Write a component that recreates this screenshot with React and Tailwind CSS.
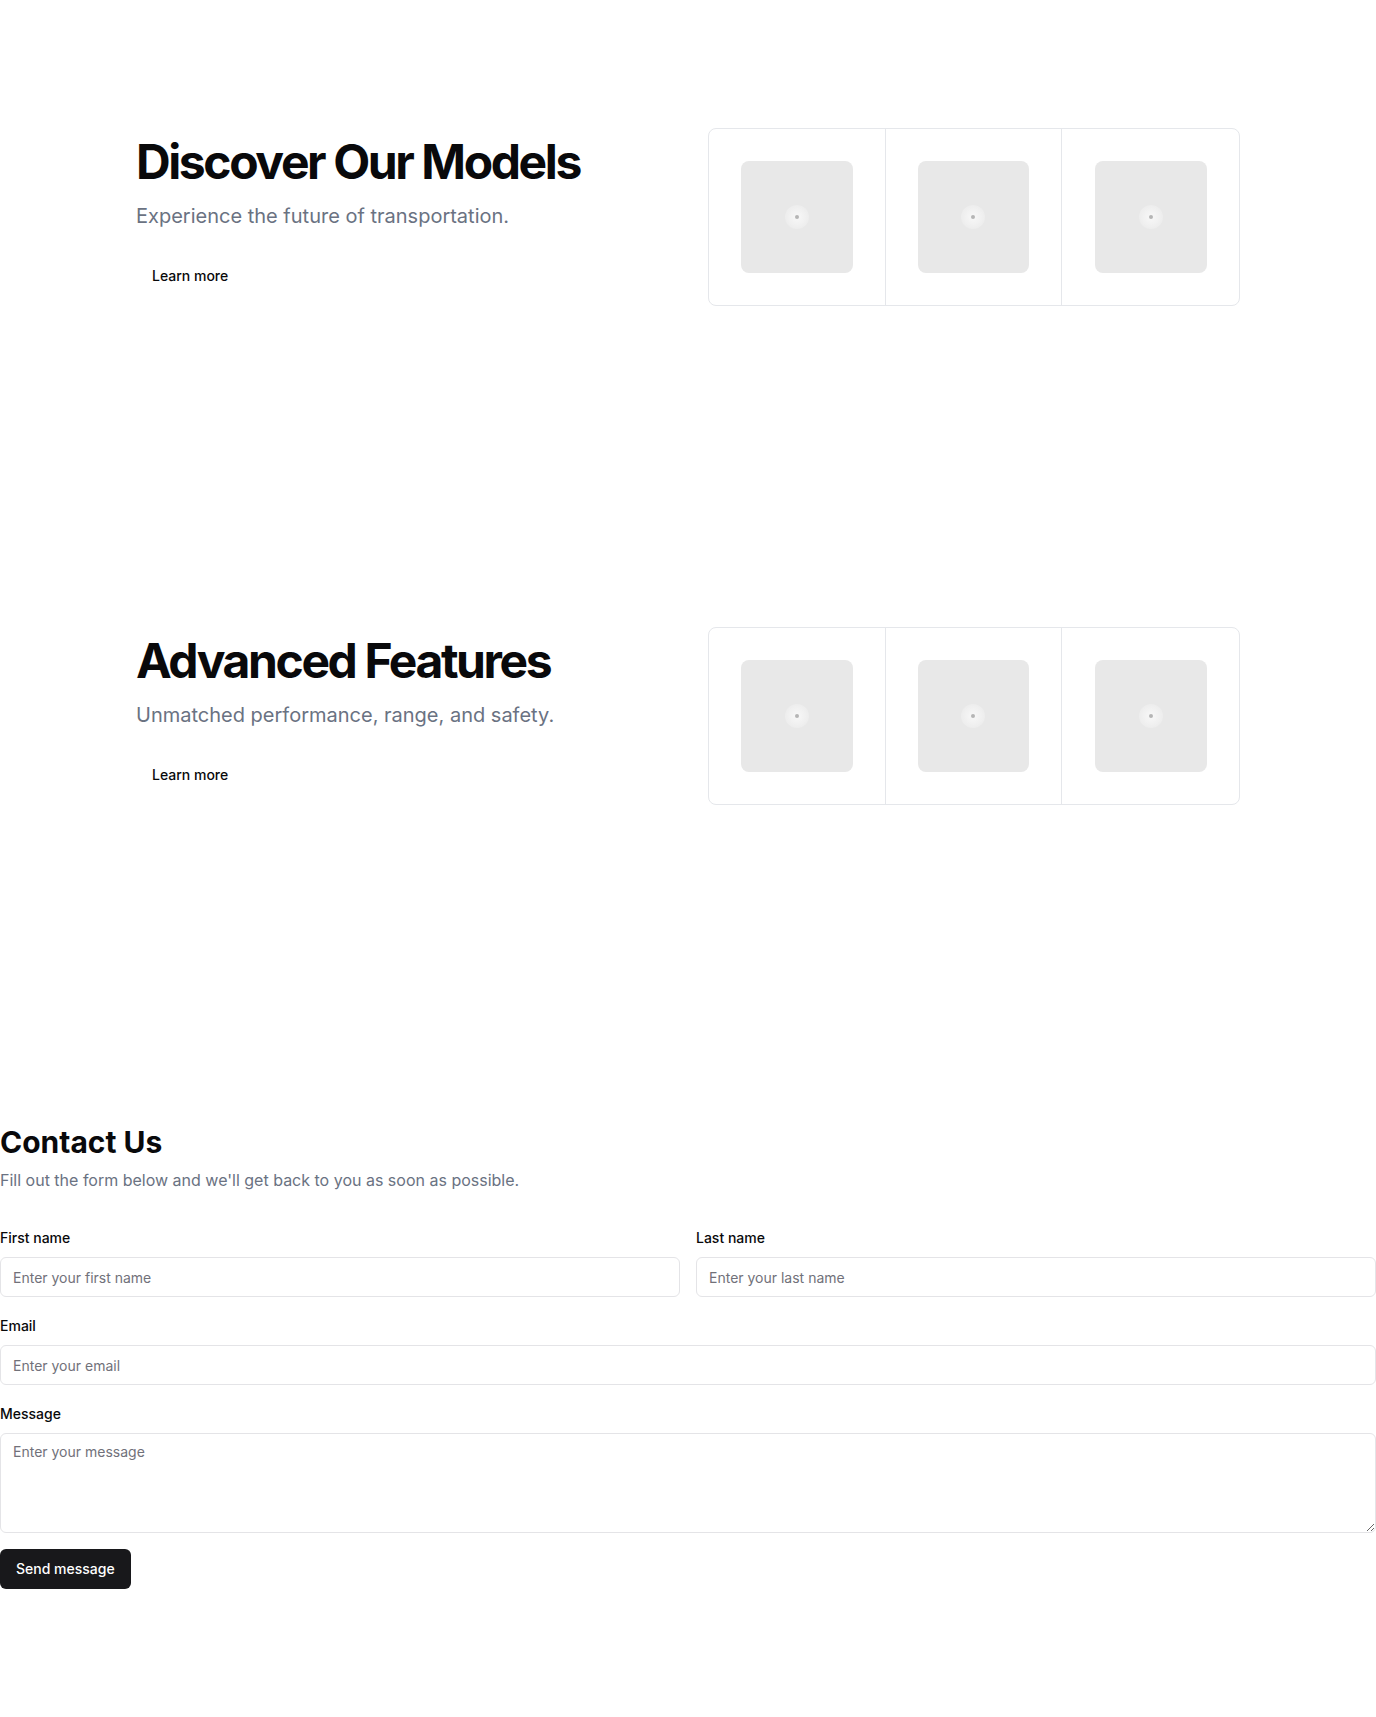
import React from "react";

const heroes = [
  { title: "Discover Our Models", sub: "Experience the future of transportation." },
  { title: "Advanced Features", sub: "Unmatched performance, range, and safety." },
];

function Placeholder() {
  return (
    <div className="flex h-[112px] w-[112px] items-center justify-center rounded-lg bg-[#e8e8e8]">
      <div className="flex h-[24px] w-[24px] items-center justify-center rounded-full bg-[radial-gradient(circle,#f8f8f8_0,#f1f1f1_45%,#e8e8e8_100%)]">
        <div className="h-[4px] w-[4px] rounded-full bg-[#b5b5b5]" />
      </div>
    </div>
  );
}

function Hero({ title, sub }) {
  return (
    <section className="min-h-[499px] pt-32">
      <div className="mx-auto grid max-w-6xl grid-cols-2 items-center gap-10 px-6">
        <div>
          <h1 className="text-5xl leading-none font-bold tracking-tighter text-[#09090b]">{title}</h1>
          <p className="mt-4 text-xl text-gray-500">{sub}</p>
          <div className="mt-[26px]">
            <button className="h-10 rounded-md px-4 text-sm font-medium text-[#09090b]">Learn more</button>
          </div>
        </div>
        <div className="grid grid-cols-3 divide-x divide-[#e5e7eb] rounded-lg border border-[#e5e7eb]">
          {[0, 1, 2].map(i => (
            <div key={i} className="flex items-center justify-center p-8">
              <Placeholder />
            </div>
          ))}
        </div>
      </div>
    </section>
  );
}

function Field({ label, children }) {
  return (
    <div>
      <label className="mb-3 block text-sm leading-none font-medium text-[#09090b]">{label}</label>
      {children}
    </div>
  );
}

const inputCls = "h-10 w-full rounded-md border border-[#e4e4e7] bg-white px-3 text-sm text-[#09090b] placeholder:text-[#71717a] outline-none";

export default function App() {
  return (
    <div className="min-h-screen bg-white font-[family-name:Inter,sans-serif]">
      {heroes.map(h => <Hero key={h.title} {...h} />)}

      <section className="pt-[126px] pb-32">
        <h2 className="text-3xl font-bold text-[#09090b]">Contact Us</h2>
        <p className="mt-2 text-base text-gray-500">Fill out the form below and we'll get back to you as soon as possible.</p>
        <form className="mt-[39px] flex flex-col gap-[22px]" onSubmit={e => e.preventDefault()}>
          <div className="grid grid-cols-2 gap-4">
            <Field label="First name"><input className={inputCls} placeholder="Enter your first name" /></Field>
            <Field label="Last name"><input className={inputCls} placeholder="Enter your last name" /></Field>
          </div>
          <Field label="Email"><input type="email" className={inputCls} placeholder="Enter your email" /></Field>
          <Field label="Message">
            <textarea className="block h-[100px] w-full rounded-md border border-[#e4e4e7] bg-white px-3 py-2 text-sm text-[#09090b] placeholder:text-[#71717a] outline-none" placeholder="Enter your message" />
          </Field>
          <div className="-mt-1.5">
            <button type="submit" className="h-10 rounded-md bg-[#18181b] px-4 text-sm font-medium text-white">Send message</button>
          </div>
        </form>
      </section>
    </div>
  );
}
